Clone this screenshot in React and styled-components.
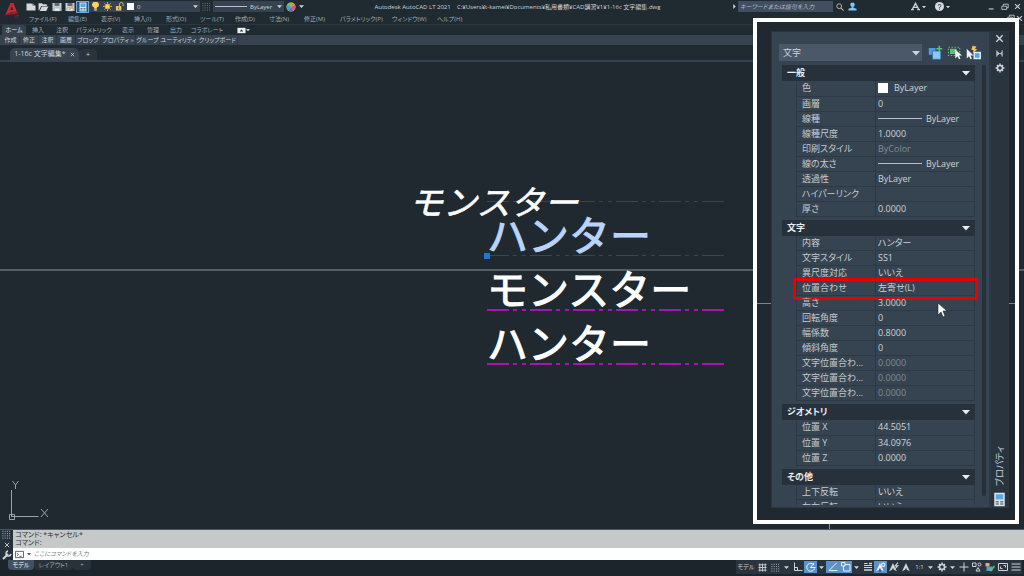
import React from "react";
import styled, { createGlobalStyle, css } from "styled-components";

const palette = {
  canvas: "#1f292f",
  chrome: "#202a31",
  bar: "#36424f",
  panel: "#364350",
  header: "#27313b",
  line: "#2d3944",
  field: "#4b586a",
  text: "#ced4d9",
  dim: "#a3abb3",
  blue: "#5b93c9",
};

const GlobalStyle = createGlobalStyle`
  * {
    box-sizing: border-box;
  }
  body {
    margin: 0;
    background: ${palette.canvas};
    color: ${palette.text};
    font-family: "Open Sans", "Noto Sans CJK JP", sans-serif;
    font-size: 7px;
    line-height: 10px;
    font-feature-settings: "palt";
  }
  button, input, select {
    margin: 0;
    padding: 0;
    border: 0;
    background: none;
    color: inherit;
    font: inherit;
    font-feature-settings: inherit;
    white-space: nowrap;
  }
`;

const AppBlock = styled.div`
  position: relative;
  display: flex;
  flex-direction: column;
  min-height: 100vh;
  overflow: hidden;
`;

/* ---------- header ---------- */

const Header = styled.header`
  display: flex;
  height: 25px;
  background: ${palette.chrome};
  border-bottom: 1px solid #2b3640;
`;

const LogoButton = styled.button`
  width: 24px;
  height: 22px;
`;

const HeaderRows = styled.div`
  flex: 1;
  min-width: 0;
`;

const TitleBar = styled.div`
  display: flex;
  align-items: center;
  height: 13px;
`;

const IconButton = styled.button`
  display: flex;
  align-items: center;
  justify-content: center;
  flex: none;
  width: ${(props) => props.$w || 13}px;
  height: 12px;
  color: ${palette.text};
  ${(props) =>
    props.$on &&
    css`
      background: ${palette.blue};
      color: #e8f1fa;
    `}
  ${(props) =>
    props.$framed &&
    css`
      background: #31536f;
      border: 1px solid #6aa9dc;
    `}
`;

const DropButton = styled.button`
  display: flex;
  align-items: center;
  gap: 3px;
  flex: none;
  width: ${(props) => props.$w}px;
  height: 11px;
  padding: 0 2px;
  background: ${palette.bar};
  font-size: 6px;
  svg:last-child {
    margin-left: auto;
  }
`;

const Swatch = styled.span`
  flex: none;
  width: ${(props) => props.$size}px;
  height: ${(props) => props.$size}px;
  background: #fff;
`;

const LineSample = styled.span`
  flex: none;
  width: ${(props) => props.$w}px;
  height: 1px;
  background: #b9c0c6;
`;

const WindowTitle = styled.h1`
  flex: 1;
  margin: 0;
  overflow: hidden;
  font-size: 6px;
  font-weight: 400;
  text-align: center;
  white-space: pre;
`;

const SearchInput = styled.input`
  width: 95px;
  height: 11px;
  padding: 0 2px;
  background: #414e60;
  font-size: 6px;
  font-style: italic;
  &::placeholder {
    color: #b4bcc4;
    opacity: 1;
  }
`;

const TitleGroup = styled.div`
  display: flex;
  align-items: center;
  margin-left: ${(props) => props.$gap}px;
`;

const MenuBar = styled.nav`
  display: flex;
  align-items: center;
  height: 11px;
  padding-left: 5px;
  color: ${palette.dim};
  font-size: 6px;
`;

const MenuItem = styled.button`
  flex: none;
  width: ${(props) => props.$w}px;
  text-align: left;
`;

const DocControls = styled.div`
  display: flex;
  align-items: flex-end;
  height: 11px;
  margin-left: auto;
`;

const RibbonTabs = styled.div`
  display: flex;
  align-items: center;
  height: 10px;
  padding-left: 2px;
  color: ${palette.dim};
  background: ${palette.chrome};
  font-size: 6px;
`;

const RibbonTab = styled.button`
  flex: none;
  width: ${(props) => props.$w}px;
  height: 10px;
  ${(props) =>
    props.$active &&
    css`
      background: ${palette.bar};
      border-radius: 2px 2px 0 0;
      color: #e4e8eb;
    `}
`;

const RibbonPanels = styled.div`
  display: flex;
  align-items: center;
  height: 10px;
  padding-left: 2px;
  background: ${palette.bar};
  font-size: 6px;
`;

const RibbonPanel = styled.button`
  flex: none;
  width: ${(props) => props.$w}px;
  border-right: 1px solid #2d3843;
`;

const FileTabs = styled.div`
  display: flex;
  align-items: flex-end;
  height: 17px;
  padding-left: 10px;
  border-bottom: 2px solid ${palette.bar};
  background: ${palette.chrome};
`;

const FileTab = styled.button`
  display: flex;
  align-items: center;
  justify-content: center;
  gap: 4px;
  width: 69px;
  height: 12px;
  background: ${palette.bar};
  border-radius: 5px 5px 0 0;
`;

const AddTab = styled.button`
  width: 18px;
  height: 11px;
  background: #29343d;
  border-radius: 4px 4px 0 0;
  color: ${palette.text};
`;

/* ---------- drawing area ---------- */

const Canvas = styled.main`
  flex: 1;
  display: flex;
  min-height: 0;
  background: ${palette.canvas};
  svg {
    flex: 1;
    height: auto;
    font-family: "Noto Sans CJK JP", sans-serif;
    font-feature-settings: normal;
  }
`;

/* ---------- command line ---------- */

const CommandWindow = styled.section`
  display: flex;
  height: 31px;
  border-top: 1px solid #4b565f;
`;

const CommandGrip = styled.div`
  display: flex;
  flex-direction: column;
  align-items: center;
  justify-content: space-between;
  width: 13px;
  background: ${palette.header};
`;

const CommandBody = styled.div`
  flex: 1;
`;

const History = styled.pre`
  height: 18px;
  margin: 0;
  padding: 1px 2px;
  background: #c5c9c8;
  color: #2c3236;
  font-family: inherit;
  line-height: 8px;
`;

const CommandInput = styled.label`
  display: flex;
  align-items: center;
  gap: 3px;
  height: 12px;
  padding-left: 2px;
  background: #fdffff;
  color: #4e565c;
  input {
    flex: 1;
    height: 12px;
    font-size: 6px;
    font-style: italic;
  }
  input::placeholder {
    color: #777d81;
    opacity: 1;
  }
`;

/* ---------- status bar ---------- */

const StatusBar = styled.footer`
  display: flex;
  align-items: flex-start;
  height: 16px;
  padding: 0 2px 0 8px;
  background: #1c252b;
`;

const LayoutTab = styled.button`
  width: ${(props) => props.$w}px;
  height: 10px;
  background: ${(props) => (props.$active ? "#43505d" : "#28323b")};
  border-radius: 0 0 4px 4px;
  color: ${(props) => (props.$active ? "#fff" : palette.dim)};
  font-size: 6px;
`;

const StatusTools = styled.div`
  display: flex;
  align-items: center;
  height: 14px;
  margin-left: auto;
  background: #2a343e;
  font-size: 6px;
`;

/* ---------- properties palette ---------- */

const Callout = styled.aside`
  position: absolute;
  top: 18px;
  right: 5px;
  width: 266px;
  height: 506px;
  padding: 9px 6px 12px 14px;
  border: 4px solid #fff;
  background: linear-gradient(#79858b, #79858b) 0 281px / 100% 1px no-repeat
    ${palette.canvas};
`;

const PaletteBox = styled.div`
  display: flex;
  height: 100%;
  border: 1px solid #2b3641;
  background: ${palette.panel};
`;

const PaletteMain = styled.div`
  flex: 1;
  display: flex;
  flex-direction: column;
  min-width: 0;
  padding: 12px 3px 2px 7px;
`;

const PaletteTools = styled.div`
  display: flex;
  align-items: center;
  gap: 4px;
  height: 17px;
  margin-bottom: 4px;
`;

const SelectBox = styled.label`
  display: flex;
  align-items: center;
  width: 143px;
  height: 17px;
  margin-right: 2px;
  padding-right: 2px;
  background: ${palette.field};
  select {
    flex: 1;
    height: 17px;
    padding-left: 4px;
    appearance: none;
    outline: none;
    font-size: 9px;
  }
`;

const ToolButton = styled.button`
  width: 15px;
  height: 15px;
`;

const ScrollArea = styled.div`
  flex: 1;
  display: flex;
  justify-content: space-between;
  min-height: 0;
  overflow: hidden;
  padding-left: 3px;
`;

const Sections = styled.div`
  width: 193px;
`;

const Thumb = styled.div`
  width: 4px;
  height: 431px;
  border-radius: 2px;
  background: #25303a;
`;

const SectionTitle = styled.button`
  display: flex;
  align-items: center;
  justify-content: space-between;
  width: 100%;
  height: 16px;
  padding: 0 5px;
  background: ${palette.header};
  color: #e9edf0;
  font-size: 9px;
  font-weight: 700;
`;

const PropTable = styled.table`
  width: 179px;
  margin: 0 0 3px 14px;
  border-collapse: collapse;
  table-layout: fixed;
  font-size: 9px;
  line-height: 14px;
  th,
  td {
    height: 15px;
    padding: 0 0 0 5px;
    border-bottom: 1px solid ${palette.line};
    border-left: 1px solid ${palette.line};
    overflow: hidden;
    font-weight: 400;
    text-align: left;
    white-space: nowrap;
    color: #c5cbd1;
  }
  th {
    width: 79px;
  }
  td {
    padding-left: 2px;
    border-right: 1px solid ${palette.line};
    color: ${palette.text};
  }
`;

const PropRow = styled.tr`
  position: relative;
  ${(props) =>
    props.$muted &&
    css`
      && td {
        color: #838c95;
      }
    `}
  ${(props) =>
    props.$marked &&
    css`
      th::after {
        content: "";
        position: absolute;
        inset: -3px -3px -4px -4px;
        border: 3px solid #ea0000;
      }
    `}
`;

const Value = styled.span`
  display: flex;
  align-items: center;
  gap: ${(props) => props.$gap || 0}px;
  height: 14px;
`;

const SideBar = styled.div`
  display: flex;
  flex-direction: column;
  align-items: center;
  gap: 3px;
  width: 19px;
  border-left: 2px solid ${palette.line};
  background: #2a343f;
`;

const SideTitle = styled.h2`
  margin: auto 0 3px;
  font-size: 9px;
  font-weight: 400;
  line-height: 12px;
  writing-mode: vertical-rl;
  text-orientation: sideways;
  transform: rotate(180deg);
`;

const Pointer = styled.svg`
  position: absolute;
  top: 280px;
  left: 180px;
`;

/* ---------- icons ---------- */

const Svg = ({ size = 10, children, ...rest }) => (
  <svg
    width={size}
    height={size}
    viewBox="0 0 20 20"
    fill="none"
    stroke="currentColor"
    strokeWidth="2"
    aria-hidden="true"
    {...rest}
  >
    {children}
  </svg>
);

const Caret = ({ size = 5 }) => (
  <Svg size={size} stroke="none" fill="currentColor">
    <path d="M0 5h20L10 16z" />
  </Svg>
);

const Cross = ({ size = 7 }) => (
  <Svg size={size} strokeWidth="3">
    <path d="M3 3l14 14M17 3L3 17" />
  </Svg>
);

const Restore = () => (
  <Svg size={8}>
    <path d="M6 7V3h12v9h-4M2 8h12v8H2z" />
  </Svg>
);

const Annot = ({ mark }) => (
  <Svg size={11}>
    <path d="M9 2l7 15-7-4-7 4z" fill="currentColor" stroke="none" />
    <path d="M9 12v6" stroke="#2a343e" />
    {mark === "star" && <circle cx="15" cy="5" r="3" />}
    {mark === "bolt" && <path d="M18 1l-5 6h5l-5 5" />}
  </Svg>
);

const Gear = ({ size = 10 }) => (
  <Svg size={size} strokeWidth="3">
    <circle cx="10" cy="10" r="5" />
    <path d="M10 1v4M10 15v4M1 10h4M15 10h4M4 4l2 2M14 14l2 2M16 4l-2 2M6 14l-2 2" />
  </Svg>
);

const LogoIcon = () => (
  <svg width="22" height="22" viewBox="0 0 22 22" aria-hidden="true">
    <path d="M4.5 14.5L9.5 3h3l4 10.5-3.4.9-.8-2.6-4 1-1 2.2z" fill="#c62a30" />
    <path d="M9.3 10.2l1.7-4.4 1.1 3.7z" fill={palette.chrome} />
    <path d="M4.5 14.5l4-1.7 8-1.7v2.4l-8.8 1.6z" fill="#8e1c22" />
    <text x="13" y="18" fontSize="4" fill="#c62a30">
      LT
    </text>
  </svg>
);

const NewIcon = () => (
  <Svg fill="#d5dadd" stroke="none">
    <path d="M1 3h10l3 4h5v10H1z" />
    <path d="M12 2l6 5h-5z" fill="#9da6ac" />
  </Svg>
);

const OpenIcon = () => (
  <Svg fill="#d5dadd" stroke="none" size={11}>
    <path d="M1 4h6l2 2h7v3H6l-4 8H1z" />
    <path d="M7 10h12l-4 8H3z" />
  </Svg>
);

const SaveIcon = ({ edit }) => (
  <Svg>
    <path d="M1 2h18v16H1z" fill="#c9cfd4" stroke="none" />
    <path d="M5 2h10v6H5z" fill="#5f6a73" stroke="none" />
    <path d="M4 12h12v6H4z" fill="#eef1f3" stroke="#7b858d" strokeWidth="1" />
    {edit && <path d="M8 16L18 6" stroke="#e9a94b" strokeWidth="3" />}
  </Svg>
);

const DeviceIcon = ({ size = 10 }) => (
  <Svg size={size}>
    <path d="M3 1h14v18H3z" fill="#dfe4e8" stroke="none" />
    <path d="M5 3h10v7H5z" fill="#5ba7e6" stroke="none" />
    <path d="M5 13h4M11 13h4M5 16h4M11 16h4" stroke="#6d7780" />
  </Svg>
);

const BulbIcon = () => (
  <Svg size={9} stroke="none">
    <path d="M10 0a6 6 0 0 1 3 12v3H7v-3a6 6 0 0 1 3-12z" fill="#ffcf62" />
    <path d="M7 16h6v3H7z" fill="#c9cfd4" />
  </Svg>
);

const SunIcon = () => (
  <Svg size={9} stroke="#f7b94a">
    <circle cx="10" cy="10" r="5" fill="#ffcf62" />
    <path d="M10 0v4M10 16v4M0 10h4M16 10h4M3 3l3 3M14 14l3 3M17 3l-3 3M6 14l-3 3" />
  </Svg>
);

const LockIcon = () => (
  <Svg size={9} stroke="#e8c27a">
    <path d="M10 9V5a4 4 0 0 1 8 0v4" />
    <path d="M2 9h12v10H2z" fill="#f2c266" stroke="none" />
    <path d="M8 12v4" stroke="#5c4a22" />
  </Svg>
);

const WheelIcon = () => (
  <Svg stroke="none">
    <circle cx="10" cy="10" r="9" fill="#e9c94d" />
    <path d="M10 10V1a9 9 0 0 1 8 5z" fill="#f08a3c" />
    <path d="M10 10l8-4a9 9 0 0 1-3 11z" fill="#d9567c" />
    <path d="M10 10l5 7a9 9 0 0 1-10 0z" fill="#7a5fd0" />
    <path d="M10 10l-5 7a9 9 0 0 1-3-11z" fill="#3f9be0" />
    <path d="M10 10L2 6a9 9 0 0 1 8-5z" fill="#62c270" />
  </Svg>
);

const DotsIcon = ({ color = "currentColor" }) => (
  <Svg size={9} stroke={color} strokeDasharray="2 3">
    <path d="M1 3h18M1 8h18M1 13h18M1 18h18" />
  </Svg>
);

const SearchIcon = () => (
  <Svg size={8}>
    <circle cx="8" cy="8" r="6" />
    <path d="M12 12l7 7" stroke="#d3a36b" strokeWidth="3" />
  </Svg>
);

const UserIcon = () => (
  <Svg size={9} fill="#7fc4f5" stroke="none">
    <circle cx="10" cy="6" r="5" />
    <path d="M8 10h4v3l7 2v4H1v-4l7-2z" />
  </Svg>
);

const StoreIcon = () => (
  <Svg size={9} strokeWidth="3">
    <path d="M3 16l7-13 7 13M6 12h9" />
    <path d="M0 17h6M14 17h6" />
  </Svg>
);

const HelpIcon = () => (
  <Svg size={9} stroke="none">
    <circle cx="10" cy="10" r="10" fill="#d7dce0" />
    <path
      d="M7 8a3 3 0 1 1 4 3l-1 1v2M10 15v2"
      stroke="#27313b"
      strokeWidth="2"
      fill="none"
    />
  </Svg>
);

const QuickSelectIcon = () => (
  <Svg size={15} stroke="none">
    <path d="M1 4h9v9H1z" fill="#4d9de0" />
    <path d="M6 8h11v11H6z" fill="#8cc6f4" stroke="#2c6ea6" strokeWidth="1" />
    <path d="M15 1v8M11 5h8" stroke="#55c46b" strokeWidth="2" />
  </Svg>
);

const PickIcon = () => (
  <Svg size={15} stroke="none">
    <path
      d="M2 3h15v11H2z"
      stroke="#5fbf72"
      strokeDasharray="2 2"
      strokeWidth="1.5"
    />
    <path d="M4 5h9v7H4z" fill="#63bd78" />
    <path d="M11 6v12l3-3 2 4 2-1-2-4h4z" fill="#f1f4f6" />
  </Svg>
);

const FilterIcon = () => (
  <Svg size={15} stroke="none">
    <path d="M9 1l5 1-2 3 3 1-6 5 1-4-3-1z" fill="#f3bf56" />
    <path d="M1 5v13l3-3 2 4 2-1-2-4h4z" fill="#f1f4f6" />
    <path d="M10 9h10v10H10z" fill="#dbe9f5" />
    <path d="M12 11h6v6h-6z" fill="#53a2e4" />
  </Svg>
);

/* ---------- data ---------- */

const menus = [
  ["ファイル(F)", 39],
  ["編集(E)", 33],
  ["表示(V)", 33],
  ["挿入(I)", 32],
  ["形式(O)", 34],
  ["ツール(T)", 35],
  ["作成(D)", 34],
  ["寸法(N)", 35],
  ["修正(M)", 36],
  ["パラメトリック(P)", 52],
  ["ウィンドウ(W)", 45],
  ["ヘルプ(H)", 40],
];

const ribbonTabs = [
  ["ホーム", 24],
  ["挿入", 24],
  ["注釈", 24],
  ["パラメトリック", 40],
  ["表示", 28],
  ["管理", 22],
  ["出力", 24],
  ["コラボレート", 38],
];

const ribbonPanels = [
  ["作成", 18],
  ["修正", 19],
  ["注釈", 18],
  ["画層", 19],
  ["ブロック", 25],
  ["プロパティ »", 35],
  ["グループ", 24],
  ["ユーティリティ", 38],
  ["クリップボード", 40],
];

const sections = [
  {
    title: "一般",
    rows: [
      { name: "色", value: "ByLayer", kind: "color" },
      { name: "画層", value: "0" },
      { name: "線種", value: "ByLayer", kind: "line" },
      { name: "線種尺度", value: "1.0000" },
      { name: "印刷スタイル", value: "ByColor", muted: true },
      { name: "線の太さ", value: "ByLayer", kind: "line" },
      { name: "透過性", value: "ByLayer" },
      { name: "ハイパーリンク", value: "" },
      { name: "厚さ", value: "0.0000" },
    ],
  },
  {
    title: "文字",
    rows: [
      { name: "内容", value: "ハンター" },
      { name: "文字スタイル", value: "SS1" },
      { name: "異尺度対応", value: "いいえ" },
      { name: "位置合わせ", value: "左寄せ(L)", marked: true },
      { name: "高さ", value: "3.0000" },
      { name: "回転角度", value: "0" },
      { name: "幅係数", value: "0.8000" },
      { name: "傾斜角度", value: "0" },
      { name: "文字位置合わ...", value: "0.0000", muted: true },
      { name: "文字位置合わ...", value: "0.0000", muted: true },
      { name: "文字位置合わ...", value: "0.0000", muted: true },
    ],
  },
  {
    title: "ジオメトリ",
    rows: [
      { name: "位置 X", value: "44.5051" },
      { name: "位置 Y", value: "34.0976" },
      { name: "位置 Z", value: "0.0000" },
    ],
  },
  {
    title: "その他",
    rows: [
      { name: "上下反転", value: "いいえ" },
      { name: "左右反転", value: "いいえ" },
    ],
  },
];

/* ---------- parts ---------- */

const PropValue = ({ kind, value }) => {
  if (kind === "color") {
    return (
      <Value $gap={6}>
        <Swatch $size={10} />
        {value}
      </Value>
    );
  }
  if (kind === "line") {
    return (
      <Value $gap={4}>
        <LineSample $w={44} />
        {value}
      </Value>
    );
  }
  return value;
};

const Section = ({ title, rows }) => (
  <section>
    <SectionTitle>
      {title}
      <Caret size={8} />
    </SectionTitle>
    <PropTable>
      <tbody>
        {rows.map((row, i) => (
          <PropRow key={i} $muted={row.muted} $marked={row.marked}>
            <th scope="row">{row.name}</th>
            <td>
              <PropValue kind={row.kind} value={row.value} />
            </td>
          </PropRow>
        ))}
      </tbody>
    </PropTable>
  </section>
);

const PropertiesPalette = () => (
  <Callout>
    <PaletteBox>
      <PaletteMain>
        <PaletteTools>
          <SelectBox>
            <select aria-label="オブジェクト" defaultValue="文字">
              <option>文字</option>
            </select>
            <Caret size={8} />
          </SelectBox>
          <ToolButton aria-label="PICKADD">
            <QuickSelectIcon />
          </ToolButton>
          <ToolButton aria-label="オブジェクト選択">
            <PickIcon />
          </ToolButton>
          <ToolButton aria-label="クイック選択">
            <FilterIcon />
          </ToolButton>
        </PaletteTools>
        <ScrollArea>
          <Sections>
            {sections.map((section) => (
              <Section key={section.title} {...section} />
            ))}
          </Sections>
          <Thumb />
        </ScrollArea>
      </PaletteMain>
      <SideBar>
        <IconButton aria-label="閉じる">
          <Cross size={9} />
        </IconButton>
        <IconButton aria-label="自動的に隠す">
          <Svg size={9}>
            <path d="M4 3v14M16 3v14" />
            <path d="M5 5l6 5-6 5z" fill="currentColor" stroke="none" />
            <path d="M15 6l-4 4 4 4z" fill="currentColor" stroke="none" />
          </Svg>
        </IconButton>
        <IconButton aria-label="設定">
          <Gear />
        </IconButton>
        <SideTitle>プロパティ</SideTitle>
        <DeviceIcon size={15} />
      </SideBar>
    </PaletteBox>
    <Pointer width="10" height="16" viewBox="0 0 10 16" aria-hidden="true">
      <path
        d="M1 1v12l3-3 2 5 2-1-2-5h4z"
        fill="#fff"
        stroke="#1b2227"
        strokeWidth="0.6"
      />
    </Pointer>
  </Callout>
);

const Drawing = () => (
  <Canvas>
    <svg aria-label="図面">
      <g fill="none" strokeDasharray="22 4 4 5 4 4">
        <path d="M487 139.500h240" stroke="#3a464d" />
        <path d="M487 193.500h240" stroke="#3a464d" />
        <path d="M487 248h240" stroke="#a815ac" strokeWidth="2" />
        <path d="M487 302h240" stroke="#a815ac" strokeWidth="2" />
      </g>
      <path d="M829.500 0v480" stroke="#8c9598" />
      <line x1="0" x2="100%" y1="208" y2="208" stroke="#8c9598" />
      <g fill="#fdfefe" stroke="#fdfefe" fontSize="41">
        <text x="409" y="153" fontSize="34" fontStyle="italic" strokeWidth="0.6">
          モンスター
        </text>
        <text x="487" y="189" fill="#b9d3fb" stroke="#b9d3fb">
          ハンター
        </text>
        <text x="487" y="243">
          モンスター
        </text>
        <text x="487" y="297">
          ハンター
        </text>
      </g>
      <path d="M484 191h6v6h-6z" fill="#1878dc" />
      <g stroke="#9aa3a7" fill="none">
        <path d="M11.500 428v27M11.500 454.500h27M9.500 452.500h5v5h-5z" />
        <path d="M12.500 419l3 4 3-4M15.500 423v4M41 447l7 8M48 447l-7 8" />
      </g>
    </svg>
  </Canvas>
);

const App = () => (
  <AppBlock>
    <GlobalStyle />
    <Header>
      <LogoButton aria-label="アプリケーション メニュー">
        <LogoIcon />
      </LogoButton>
      <HeaderRows>
        <TitleBar>
          <IconButton aria-label="新規">
            <NewIcon />
          </IconButton>
          <IconButton aria-label="開く">
            <OpenIcon />
          </IconButton>
          <IconButton aria-label="上書き保存">
            <SaveIcon />
          </IconButton>
          <IconButton aria-label="名前を付けて保存">
            <SaveIcon edit />
          </IconButton>
          <IconButton aria-label="プロパティ" $framed>
            <DeviceIcon />
          </IconButton>
          <DropButton $w={111}>
            <BulbIcon />
            <SunIcon />
            <LockIcon />
            <Swatch $size={7} />0
            <Caret />
          </DropButton>
          <IconButton aria-label="線種">
            <DotsIcon color="#7f8990" />
          </IconButton>
          <DropButton $w={71}>
            <LineSample $w={32} />
            ByLayer
            <Caret />
          </DropButton>
          <IconButton aria-label="色">
            <WheelIcon />
          </IconButton>
          <IconButton aria-label="カスタマイズ" $w={8}>
            <Caret />
          </IconButton>
          <WindowTitle>
            {
              "Autodesk AutoCAD LT 2021    C:¥Users¥t-kamei¥Documents¥私用書類¥CAD講習¥1¥1-16c 文字編集.dwg"
            }
          </WindowTitle>
          <IconButton aria-label="検索を隠す" $w={8}>
            <Svg size={5} fill="currentColor" stroke="none">
              <path d="M5 0v20l10-10z" />
            </Svg>
          </IconButton>
          <SearchInput
            aria-label="検索"
            placeholder="キーワードまたは語句を入力"
          />
          <IconButton aria-label="検索">
            <SearchIcon />
          </IconButton>
          <IconButton aria-label="サインイン">
            <UserIcon />
          </IconButton>
          <TitleGroup $gap={50}>
            <IconButton aria-label="App Store">
              <StoreIcon />
            </IconButton>
            <Caret size={4} />
          </TitleGroup>
          <TitleGroup $gap={7}>
            <IconButton aria-label="ヘルプ">
              <HelpIcon />
            </IconButton>
            <Caret size={4} />
          </TitleGroup>
          <TitleGroup $gap={35}>
            <IconButton aria-label="最小化">
              <Svg size={7} strokeWidth="3">
                <path d="M2 17h14" />
              </Svg>
            </IconButton>
            <IconButton aria-label="元に戻す">
              <Restore />
            </IconButton>
            <IconButton aria-label="閉じる">
              <Cross />
            </IconButton>
          </TitleGroup>
        </TitleBar>
        <MenuBar>
          {menus.map(([name, width]) => (
            <MenuItem key={name} $w={width}>
              {name}
            </MenuItem>
          ))}
          <DocControls>
            <IconButton aria-label="図面を元に戻す" $w={9}>
              <Restore />
            </IconButton>
            <IconButton aria-label="図面を閉じる" $w={9}>
              <Cross />
            </IconButton>
          </DocControls>
        </MenuBar>
      </HeaderRows>
    </Header>
    <RibbonTabs>
      {ribbonTabs.map(([name, width], i) => (
        <RibbonTab key={name} $w={width} $active={i === 0}>
          {name}
        </RibbonTab>
      ))}
      <IconButton aria-label="リボンを最小化" $w={34}>
        <Svg size={9} stroke="none">
          <path d="M1 4h18v12H1z" fill="#eef1f3" />
          <path d="M6 12l4-5 4 5z" fill="#333d46" />
        </Svg>
        <Caret size={4} />
      </IconButton>
    </RibbonTabs>
    <RibbonPanels>
      {ribbonPanels.map(([name, width]) => (
        <RibbonPanel key={name} $w={width}>
          {name}
        </RibbonPanel>
      ))}
    </RibbonPanels>
    <FileTabs>
      <FileTab>
        1-16c 文字編集*
        <Cross size={5} />
      </FileTab>
      <AddTab aria-label="新しいタブ">+</AddTab>
    </FileTabs>
    <Drawing />
    <CommandWindow>
      <CommandGrip>
        <DotsIcon />
        <Cross size={6} />
        <Svg size={10} strokeWidth="4">
          <path d="M2 18L12 8" />
          <path d="M12 2a5 5 0 1 0 6 6" strokeWidth="3" />
        </Svg>
      </CommandGrip>
      <CommandBody>
        <History>{"コマンド: *キャンセル*\nコマンド:"}</History>
        <CommandInput>
          <Svg size={9}>
            <path d="M1 3h18v14H1zM4 7l4 3-4 3M10 14h5" />
          </Svg>
          <Caret size={4} />
          <input aria-label="コマンド" placeholder="ここにコマンドを入力" />
        </CommandInput>
      </CommandBody>
    </CommandWindow>
    <StatusBar>
      <LayoutTab $w={26} $active>
        モデル
      </LayoutTab>
      <LayoutTab $w={39}>レイアウト1</LayoutTab>
      <LayoutTab $w={18} aria-label="新しいレイアウト">
        +
      </LayoutTab>
      <StatusTools>
        <IconButton $w={20}>モデル</IconButton>
        <IconButton aria-label="グリッド">
          <Svg size={9}>
            <path d="M4 1v18M10 1v18M16 1v18M1 4h18M1 10h18M1 16h18" />
          </Svg>
        </IconButton>
        <IconButton aria-label="スナップ">
          <DotsIcon />
        </IconButton>
        <IconButton aria-label="スナップ設定" $w={9}>
          <Caret />
        </IconButton>
        <IconButton aria-label="直交モード">
          <Svg>
            <path d="M3 1v16h16M3 11h6v6" />
          </Svg>
        </IconButton>
        <IconButton aria-label="極トラッキング" $on>
          <Svg>
            <path d="M16 6a8 8 0 1 0 1 7M9 11h10M9 11l7-9" />
          </Svg>
        </IconButton>
        <IconButton aria-label="極トラッキング設定" $w={9}>
          <Caret />
        </IconButton>
        <IconButton aria-label="スナップ トラッキング" $on>
          <Svg>
            <path d="M17 2L2 17h17" />
          </Svg>
        </IconButton>
        <IconButton aria-label="オブジェクト スナップ" $on>
          <Svg>
            <path d="M5 5h13v13H5z" />
            <path d="M1 1h7v7H1z" fill={palette.blue} />
          </Svg>
        </IconButton>
        <IconButton aria-label="スナップ点" $w={9}>
          <Caret />
        </IconButton>
        <IconButton aria-label="線の太さ">
          <Svg>
            <path d="M2 3h7M2 7h16M2 11h16" />
            <path d="M2 16h16M12 3h6" strokeWidth="3" />
          </Svg>
        </IconButton>
        <IconButton aria-label="注釈オブジェクトを表示" $on>
          <Annot mark="star" />
        </IconButton>
        <IconButton aria-label="自動尺度">
          <Annot mark="bolt" />
        </IconButton>
        <IconButton aria-label="注釈尺度">
          <Annot />
        </IconButton>
        <IconButton>1:1</IconButton>
        <IconButton aria-label="尺度一覧" $w={9}>
          <Caret />
        </IconButton>
        <IconButton aria-label="ワークスペース">
          <Gear />
        </IconButton>
        <IconButton aria-label="ワークスペース一覧" $w={9}>
          <Caret />
        </IconButton>
        <IconButton aria-label="注釈モニター">
          <Svg>
            <path d="M10 1v18M1 10h18" />
          </Svg>
        </IconButton>
        <IconButton aria-label="選択表示">
          <Svg>
            <path d="M1 2h7v7H1zM8 18l4-7 4 7z" />
            <circle cx="15" cy="5" r="3" />
          </Svg>
        </IconButton>
        <IconButton aria-label="グラフィックス">
          <Svg stroke="none">
            <path d="M1 2h8v7H1z" fill="#e3b64c" />
            <path d="M3 9h12v9H3z" fill="#4b9fe2" />
            <path d="M9 13l3 4 7-9" stroke="#62c270" strokeWidth="3" />
          </Svg>
        </IconButton>
        <IconButton aria-label="フルスクリーン">
          <Svg>
            <path d="M1 3h18v14H1zM11 7h4v4M5 9v4h4" />
          </Svg>
        </IconButton>
        <IconButton aria-label="カスタマイズ">
          <Svg>
            <path d="M1 4h18M1 10h18M1 16h18" />
          </Svg>
        </IconButton>
      </StatusTools>
    </StatusBar>
    <PropertiesPalette />
  </AppBlock>
);

export default App;
